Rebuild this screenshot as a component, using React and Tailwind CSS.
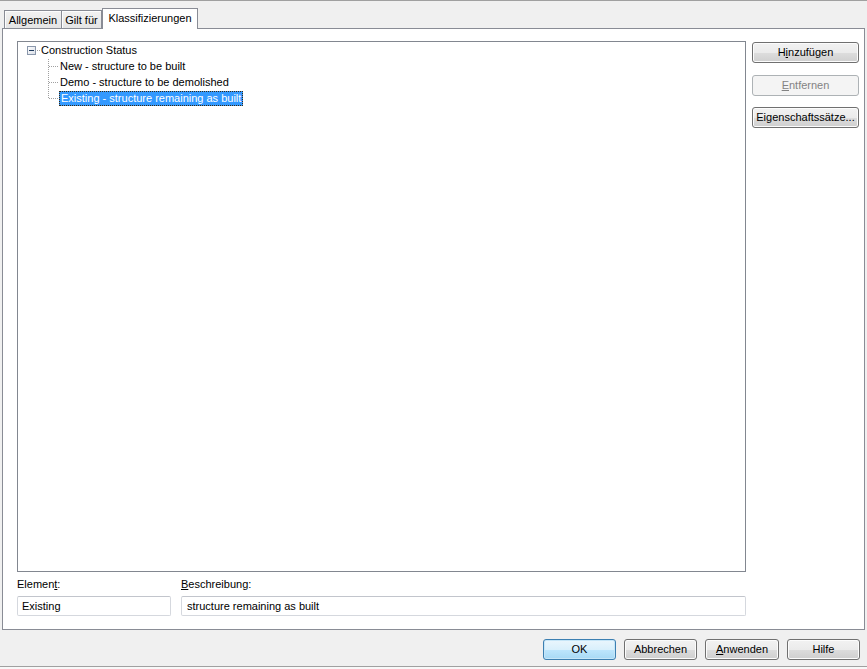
import React from "react";

const btn =
  "flex items-center justify-center rounded-[3px] border border-[#707070] bg-[linear-gradient(#f2f2f2_0%,#ebebeb_50%,#dddddd_51%,#cfcfcf_100%)] text-black shadow-[inset_0_0_0_1px_#fcfcfc]";

function Tab({ children, w, selected, first }) {
  if (selected) {
    return (
      <div
        className={`relative z-10 -mb-px flex h-[21px] items-start justify-center border border-b-0 border-[#898c95] bg-white pt-[3px] ${w}`}
      >
        {children}
      </div>
    );
  }
  return (
    <div
      className={`flex h-[18px] items-start justify-center border border-b-0 border-[#898c95] bg-[linear-gradient(#f2f2f2,#e4e4e4)] pt-[3px] shadow-[inset_1px_1px_0_#fdfdfd] ${first ? "" : "border-l-0"} ${w}`}
    >
      {children}
    </div>
  );
}

function TreeLines() {
  return (
    <svg
      className="pointer-events-none absolute left-0 top-0"
      width="60"
      height="70"
      viewBox="0 0 60 70"
    >
      {/* vertical dotted */}
      <line x1="30.5" y1="17" x2="30.5" y2="57" stroke="#a0a0a0" strokeDasharray="1 1" />
      {/* horizontal dotted to children */}
      <line x1="31" y1="24.5" x2="41" y2="24.5" stroke="#a0a0a0" strokeDasharray="1 1" />
      <line x1="31" y1="40.5" x2="41" y2="40.5" stroke="#a0a0a0" strokeDasharray="1 1" />
      <line x1="31" y1="56.5" x2="41" y2="56.5" stroke="#a0a0a0" strokeDasharray="1 1" />
      {/* root connector */}
      <line x1="19" y1="8.5" x2="23" y2="8.5" stroke="#a0a0a0" strokeDasharray="1 1" />
      {/* expander box */}
      <defs>
        <linearGradient id="bx" x1="0" y1="0" x2="1" y2="1">
          <stop offset="0" stopColor="#ffffff" />
          <stop offset="1" stopColor="#d8dde6" />
        </linearGradient>
      </defs>
      <rect x="9.5" y="4.5" width="8" height="8" fill="url(#bx)" stroke="#8a97ab" />
      <line x1="11" y1="8.5" x2="16" y2="8.5" stroke="#1e395b" />
    </svg>
  );
}

export default function App() {
  return (
    <div
      className="flex h-[669px] w-[867px] flex-col overflow-hidden border-t border-[#a0a0a0] bg-[#f0f0f0] text-[11px] leading-[13px] text-black"
      style={{ fontFamily: '"Liberation Sans", Arial, sans-serif' }}
    >
      {/* tab strip */}
      <div className="flex h-[27px] items-end pl-[4px]">
        <Tab w="w-[58px]" first>
          Allgemein
        </Tab>
        <Tab w="w-[40px]">Gilt für</Tab>
        <Tab w="w-[96px]" selected>
          Klassifizierungen
        </Tab>
      </div>

      {/* panel */}
      <div className="mx-[2px] flex h-[602px] border border-[#898c95] bg-white pl-[14px] pt-[12px]">
        <div className="flex w-[729px] flex-col">
          {/* tree */}
          <div className="relative h-[531px] border border-[#828790] bg-white">
            <TreeLines />
            <div className="flex flex-col">
              <div className="flex h-[16px] items-center pl-[23px]">Construction Status</div>
              <div className="flex h-[16px] items-center pl-[42px]">New - structure to be built</div>
              <div className="flex h-[16px] items-center pl-[42px]">Demo - structure to be demolished</div>
              <div className="flex h-[16px] items-center pl-[41px]">
                <span className="flex h-[15px] items-center border border-dotted border-[#3a2a10] bg-[#3399ff] pl-[1px] pr-[1px] text-white">
                  Existing - structure remaining as built
                </span>
              </div>
            </div>
          </div>

          {/* labels */}
          <div className="flex h-[24px] items-center gap-[10px]">
            <div className="w-[154px]">
              Elemen<span className="underline">t</span>:
            </div>
            <div className="flex-1">
              <span className="underline">B</span>eschreibung:
            </div>
          </div>

          {/* inputs */}
          <div className="flex gap-[10px]">
            <div className="flex h-[20px] w-[154px] items-center rounded-[2px] border border-[#d5d8de] border-t-[#c2c5cc] pl-[4px]">
              Existing
            </div>
            <div className="flex h-[20px] flex-1 items-center rounded-[2px] border border-[#d5d8de] border-t-[#c2c5cc] pl-[5px]">
              structure remaining as built
            </div>
          </div>
        </div>

        {/* right buttons */}
        <div className="ml-[6px] flex flex-col pt-[1px]">
          <div className={`${btn} h-[21px] w-[107px]`}>
            H<span className="underline">i</span>nzufügen
          </div>
          <div className="mt-[12px] flex h-[21px] w-[107px] items-center justify-center rounded-[3px] border border-[#adb2b5] bg-[#f4f4f4] text-[#838383]">
            <span className="underline">E</span>ntfernen
          </div>
          <div className={`${btn} mt-[11px] h-[21px] w-[107px]`}>Eigenschaftssätze...</div>
        </div>
      </div>

      {/* bottom bar */}
      <div className="flex h-[36px] items-start justify-end gap-[8px] pr-[7px] pt-[9px]">
        <div className="flex h-[21px] w-[73px] items-center justify-center rounded-[3px] border border-[#3c7fb1] bg-[linear-gradient(#eaf6fd_0%,#d9f0fc_50%,#bee6fd_51%,#a7d9f5_100%)] shadow-[inset_0_0_0_1px_#c6e6f8]">
          OK
        </div>
        <div className={`${btn} h-[21px] w-[73px]`}>Abbrechen</div>
        <div className={`${btn} h-[21px] w-[74px]`}>
          <span className="underline">A</span>nwenden
        </div>
        <div className={`${btn} h-[21px] w-[73px]`}>Hilfe</div>
      </div>
      <div className="h-px bg-[#a0a0a0]" />
      <div className="h-[2px] bg-[#f8f8f8]" />
    </div>
  );
}
